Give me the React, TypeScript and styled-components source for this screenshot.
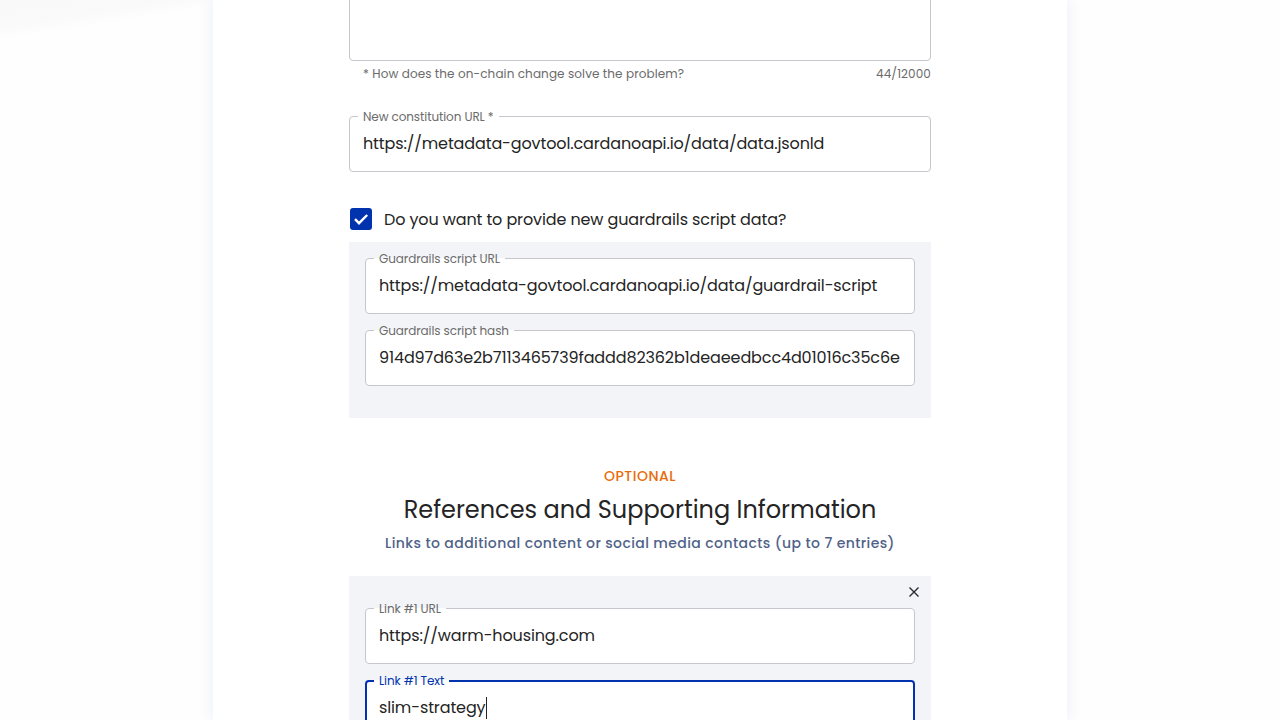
import { createGlobalStyle, styled } from "styled-components";

const GlobalStyle = createGlobalStyle`
  html, body {
    margin: 0;
    padding: 0;
    height: 100%;
    overflow: hidden;
  }
  body {
    font-family: Poppins, "Open Sans", "Noto Sans", sans-serif;
    background: linear-gradient(171deg, #f9f9fa 0px, #fafafb 28px, #fefefe 40px, #fefefe 100%);
    color: #242424;
  }
`;

const Page = styled.div`
  display: flex;
  justify-content: center;
  height: 720px;
`;

const Card = styled.div`
  width: 854px;
  background: #ffffff;
  box-shadow: 0 0 14px rgba(60, 90, 200, 0.1);
  display: flex;
  justify-content: center;
  align-items: flex-start;
  overflow: hidden;
`;

const Content = styled.div`
  width: 582px;
  flex-shrink: 0;
  margin-top: -60px;
  display: flex;
  flex-direction: column;
`;

const Field = styled.div<{ $height?: number }>`
  position: relative;
  flex-shrink: 0;
  height: ${(p) => p.$height ?? 56}px;
  background: #ffffff;
  border-radius: 4px;
`;

const Input = styled.input`
  width: 100%;
  height: 100%;
  box-sizing: border-box;
  border: 0;
  outline: none;
  background: transparent;
  padding: 0 10px 1px 14px;
  font-family: inherit;
  font-size: 16px;
  letter-spacing: -0.12px;
  color: #242424;
`;

const Area = styled.textarea`
  width: 100%;
  height: 100%;
  box-sizing: border-box;
  border: 0;
  outline: none;
  resize: none;
  background: transparent;
  padding: 16px 14px;
  font-family: inherit;
  font-size: 16px;
`;

const Outline = styled.fieldset<{ $focused?: boolean }>`
  position: absolute;
  inset: -5px 0 0 0;
  margin: 0;
  padding: 0 8px;
  border: ${(p) => (p.$focused ? "2px solid #0033ad" : "1px solid #c6c6cc")};
  border-radius: 4px;
  pointer-events: none;
`;

const Legend = styled.legend<{ $focused?: boolean }>`
  padding: 0 5px;
  font-size: 12px;
  line-height: 11px;
  letter-spacing: -0.1px;
  color: ${(p) => (p.$focused ? "#0033ad" : "#6b6b6b")};
  margin-left: ${(p) => (p.$focused ? "-1px" : "0")};
`;

const Helper = styled.div`
  display: flex;
  justify-content: space-between;
  padding-left: 14px;
  margin-top: 3px;
  font-size: 12px;
  line-height: 20px;
  letter-spacing: 0.1px;
  color: #6b6b6b;
`;

const Spacer = styled.div<{ $h: number }>`
  height: ${(p) => p.$h}px;
  flex-shrink: 0;
`;

const CheckRow = styled.label`
  display: flex;
  align-items: center;
  gap: 12px;
  height: 22px;
  margin-top: 36px;
  margin-left: 1px;
  font-size: 16px;
  letter-spacing: -0.12px;
  color: #242424;
`;

const CheckBox = styled.span`
  width: 22px;
  height: 22px;
  border-radius: 3px;
  background: #0033ad;
  display: flex;
  align-items: center;
  justify-content: center;
`;

const GrayBox = styled.div<{ $top?: number; $mt?: number }>`
  position: relative;
  flex-shrink: 0;
  background: #f2f4f8;
  padding: ${(p) => p.$top ?? 16}px 16px 32px;
  display: flex;
  flex-direction: column;
  gap: 16px;
  margin-top: ${(p) => p.$mt ?? 12}px;
`;

const Section = styled.div`
  display: flex;
  flex-direction: column;
  align-items: center;
  margin-top: 48px;
  margin-bottom: 23px;
`;

const Overline = styled.div`
  font-size: 14px;
  line-height: 20px;
  font-weight: 500;
  color: #e86c0a;
  letter-spacing: 0.5px;
`;

const Title = styled.h2`
  margin: 8px 0 0;
  font-size: 24px;
  line-height: 32px;
  font-weight: 400;
  color: #242424;
`;

const Subtitle = styled.div`
  margin-top: 7px;
  font-size: 14px;
  line-height: 20px;
  font-weight: 500;
  letter-spacing: 0.4px;
  color: #506288;
`;

const CloseButton = styled.button`
  position: absolute;
  top: 6px;
  right: 7px;
  width: 20px;
  height: 20px;
  padding: 0;
  border: 0;
  background: transparent;
  display: flex;
  align-items: center;
  justify-content: center;
`;

const Caret = styled.span`
  display: inline-block;
  width: 1px;
  height: 22px;
  background: #242424;
  vertical-align: middle;
`;

const FocusedValue = styled.div`
  position: absolute;
  left: 14px;
  top: 0;
  bottom: 1px;
  display: flex;
  align-items: center;
  font-size: 16px;
  letter-spacing: -0.12px;
  color: #242424;
`;

function TextField({ label, value }: { label: string; value: string }) {
  return (
    <Field>
      <Input readOnly value={value} />
      <Outline>
        <Legend>{label}</Legend>
      </Outline>
    </Field>
  );
}

export default function App() {
  return (
    <>
      <GlobalStyle />
      <Page>
        <Card>
          <Content>
            {/* solution textarea, its label sits above the visible area */}
            <Field $height={121}>
              <Area readOnly aria-label="Solution" />
              <Outline />
            </Field>
            <Helper>
              <span>* How does the on-chain change solve the problem?</span>
              <span>44/12000</span>
            </Helper>
            <Spacer $h={32} />
            <TextField
              label="New constitution URL *"
              value="https://metadata-govtool.cardanoapi.io/data/data.jsonld"
            />
            <CheckRow>
              <CheckBox>
                <svg width="18" height="18" viewBox="0 0 18 18">
                  <path d="M3 9.2l4 4L15.2 5" fill="none" stroke="#fff" strokeWidth="2.4" />
                </svg>
              </CheckBox>
              Do you want to provide new guardrails script data?
            </CheckRow>
            <GrayBox>
              <TextField
                label="Guardrails script URL"
                value="https://metadata-govtool.cardanoapi.io/data/guardrail-script"
              />
              <TextField
                label="Guardrails script hash"
                value="914d97d63e2b7113465739faddd82362b1deaeedbcc4d01016c35c6e"
              />
            </GrayBox>
            <Section>
              <Overline>OPTIONAL</Overline>
              <Title>References and Supporting Information</Title>
              <Subtitle>Links to additional content or social media contacts (up to 7 entries)</Subtitle>
            </Section>
            <GrayBox $top={32} $mt={0}>
              <CloseButton aria-label="Remove link">
                <svg width="12" height="12" viewBox="0 0 12 12">
                  <path d="M1.5 1.5l9 9M10.5 1.5l-9 9" stroke="#2a2a35" strokeWidth="1.4" />
                </svg>
              </CloseButton>
              <TextField label="Link #1 URL" value="https://warm-housing.com" />
              <Field>
                <FocusedValue>
                  slim-strategy
                  <Caret />
                </FocusedValue>
                <Outline $focused>
                  <Legend $focused>Link #1 Text</Legend>
                </Outline>
              </Field>
            </GrayBox>
          </Content>
        </Card>
      </Page>
    </>
  );
}
